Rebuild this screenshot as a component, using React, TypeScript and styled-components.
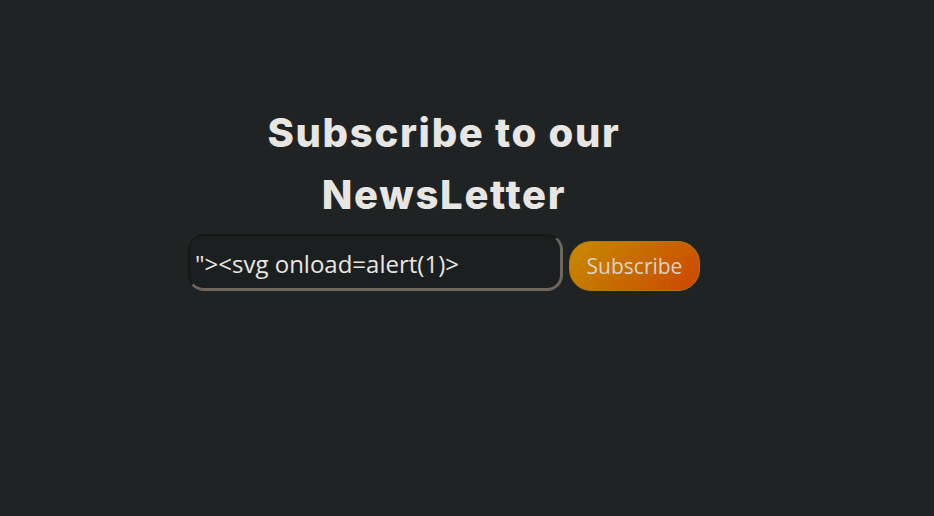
import React from "react";
import styled, { createGlobalStyle } from "styled-components";

const Global = createGlobalStyle`
  html, body { margin: 0; padding: 0; background: #202324; }
  body { min-height: 516px; }
`;

const Page = styled.main`
  display: flex;
  flex-direction: column;
  align-items: center;
  padding: 102px 46px 0 0;
  min-height: 516px;
  box-sizing: border-box;
  background: #202324;
`;

const Title = styled.h1`
  margin: 0;
  font-family: Inter, "Open Sans", sans-serif;
  font-weight: 800;
  font-size: 40px;
  line-height: 62px;
  letter-spacing: 1.7px;
  color: #e8e6e3;
  text-align: center;
`;

const Form = styled.form`
  display: flex;
  align-items: flex-end;
  gap: 6px;
  margin-top: 8px;
`;

const Field = styled.input`
  box-sizing: border-box;
  width: 375px;
  height: 57px;
  padding: 2px 5px 0;
  border-width: 2px 3px 3px 2px;
  border-style: solid;
  border-color: #1a1816 #6e665c #6e665c #1a1816;
  border-radius: 16px;
  background: #1c1f20;
  color: #e8e6e3;
  font-family: "Open Sans", sans-serif;
  font-size: 24px;
  outline: none;
`;

const Button = styled.button`
  box-sizing: border-box;
  width: 131px;
  height: 50px;
  border: 1px solid #b17a0a;
  border-radius: 22px;
  background: linear-gradient(135deg, #c88b00 0%, #c66a00 50%, #cf4500 100%);
  color: #d8d3cb;
  font-family: "Open Sans", sans-serif;
  font-size: 21px;
  padding: 0;
  cursor: pointer;
`;

export default function App() {
  return (
    <>
      <Global />
      <Page>
        <Title>
          Subscribe to our
          <br />
          NewsLetter
        </Title>
        <Form onSubmit={(e) => e.preventDefault()}>
          <Field type="text" defaultValue={'"><svg onload=alert(1)>'} />
          <Button type="submit">Subscribe</Button>
        </Form>
      </Page>
    </>
  );
}
